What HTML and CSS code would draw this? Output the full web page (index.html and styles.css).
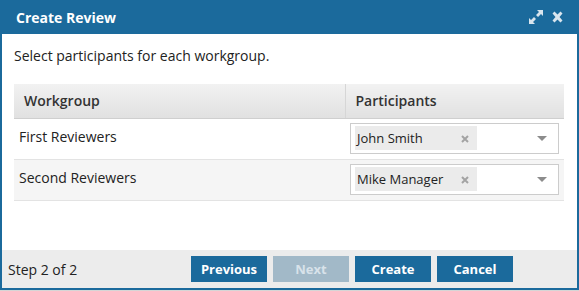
FILE: index.html
```html
<!DOCTYPE html>
<html lang="en">
<head>
    <meta charset="UTF-8">
    <title>Create Review</title>
    <link rel="stylesheet" href="styles.css">
</head>
<body>
    <div class="dialog">
        <div class="titlebar">
            <span class="title">Create Review</span>
            <span class="tools">
                <svg class="icon" width="16" height="16" viewBox="0 0 16 16">
                    <path d="M9 1h6v6l-2-2-3 3-2-2 3-3z M7 15H1V9l2 2 3-3 2 2-3 3z" fill="#d9e5ee"/>
                </svg>
                <svg class="icon" width="13" height="12" viewBox="0 0 13 12">
                    <path d="M1.5 2.5l2-2 3 3 3-3 2 2-3 3.5 3 3.5-2 2-3-3-3 3-2-2 3-3.5z" fill="#d9e5ee"/>
                </svg>
            </span>
        </div>

        <div class="content">
            <p class="intro">Select participants for each workgroup.</p>

            <table class="grid">
                <thead>
                    <tr>
                        <th class="col-group">Workgroup</th>
                        <th class="col-people">Participants</th>
                    </tr>
                </thead>
                <tbody>
                    <tr>
                        <td class="cell-name">First Reviewers</td>
                        <td class="cell-select">
                            <div class="select">
                                <span class="tag">John Smith
                                    <svg class="tag-x" width="8" height="8" viewBox="0 0 8 8">
                                        <path d="M1 1l6 6M7 1l-6 6" stroke="#a3a3a3" stroke-width="2"/>
                                    </svg>
                                </span>
                                <span class="caret"></span>
                            </div>
                        </td>
                    </tr>
                    <tr class="alt">
                        <td class="cell-name">Second Reviewers</td>
                        <td class="cell-select">
                            <div class="select">
                                <span class="tag">Mike Manager
                                    <svg class="tag-x" width="8" height="8" viewBox="0 0 8 8">
                                        <path d="M1 1l6 6M7 1l-6 6" stroke="#a3a3a3" stroke-width="2"/>
                                    </svg>
                                </span>
                                <span class="caret"></span>
                            </div>
                        </td>
                    </tr>
                </tbody>
            </table>
        </div>

        <div class="footer">
            <span class="step">Step 2 of 2</span>
            <div class="buttons">
                <button class="btn">Previous</button>
                <button class="btn" disabled>Next</button>
                <button class="btn">Create</button>
                <button class="btn">Cancel</button>
            </div>
        </div>
    </div>
</body>
</html>
```

FILE: styles.css
```css
* {
    box-sizing: border-box;
    font-family: 'Open Sans', 'Noto Sans', sans-serif;
}
body {
    margin: 0;
    background-color: #d6d6d6;
}
.dialog {
    width: 579px;
    height: 290px;
    display: flex;
    flex-direction: column;
    background-color: white;
    border: 2px solid #1b6a9c;
    border-top: none;
}
.titlebar {
    height: 34px;
    margin: 0 -2px;
    padding: 0 16px;
    display: flex;
    align-items: center;
    justify-content: space-between;
    background-color: #1b6a9c;
}
.title {
    color: white;
    font-size: 14px;
    font-weight: bold;
}
.tools {
    display: flex;
    align-items: center;
    gap: 7px;
    margin-right: -1px;
}
.content {
    flex: 1;
    padding: 12px 13px 0 12px;
}
.intro {
    margin: 0 0 18px;
    font-size: 14px;
    line-height: 20px;
    color: #222;
}
.grid {
    width: 100%;
    border-collapse: collapse;
    font-size: 14px;
    color: #222;
}
.grid th {
    height: 34px;
    padding: 0 10px;
    text-align: left;
    font-weight: 600;
    color: #333;
    background: linear-gradient(#f2f2f2, #e1e1e1);
    border-bottom: 1px solid #cfcfcf;
}
.col-group {
    width: 332px;
    border-right: 1px solid #d6d6d6;
}
.grid td {
    height: 41px;
    padding: 0 5px;
    border-bottom: 1px solid #e3e3e3;
}
.grid tr.alt td {
    background-color: #f5f5f5;
}
.grid td.cell-name {
    padding-bottom: 4px;
}
.grid td.cell-select {
    padding-bottom: 1px;
}
.select {
    width: 209px;
    height: 31px;
    padding: 3px 4px;
    display: flex;
    align-items: center;
    justify-content: space-between;
    background-color: white;
    border: 1px solid #cccccc;
}
.tag {
    width: 122px;
    height: 24px;
    padding: 0 8px 0 2px;
    display: flex;
    align-items: center;
    justify-content: space-between;
    background-color: #ebebeb;
    font-size: 13px;
    color: #222;
}
.tag-x {
    margin-top: 2px;
}
.caret {
    width: 0;
    height: 0;
    margin-right: 7px;
    border-left: 5px solid transparent;
    border-right: 5px solid transparent;
    border-top: 5px solid #8c8c8c;
}
.footer {
    height: 38px;
    padding-left: 6px;
    display: flex;
    align-items: center;
    background-color: #ececec;
}
.step {
    width: 183px;
    font-size: 14px;
    color: #222;
}
.buttons {
    display: flex;
    gap: 6px;
}
.btn {
    width: 76px;
    height: 26px;
    padding: 0;
    border: none;
    background-color: #1b6a9c;
    color: white;
    font-size: 13px;
    font-weight: bold;
    cursor: pointer;
}
.btn:disabled {
    background-color: #a2b9c8;
    color: #d8e2ea;
    cursor: default;
}
```
